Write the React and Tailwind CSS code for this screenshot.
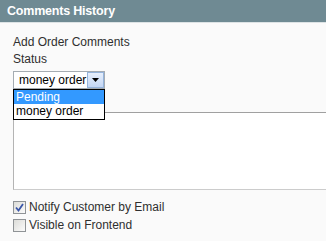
import React from 'react';

const font = { fontFamily: '"Liberation Sans", Arial, sans-serif' };

// --- 小元件: 勾選框 ---
const Checkbox = ({ checked, label }) => (
  <label className="flex items-center h-[18px] gap-[3px] text-[12px] text-[#2f2f2f]">
    <span className="w-[13px] h-[13px] border border-[#8f9396] bg-gradient-to-br from-[#dcdcd8] to-[#fbfbfb] flex items-center justify-center">
      {checked && (
        <svg width="9" height="9" viewBox="0 0 9 9">
          <path d="M1 4.5 L3.5 7.5 L8 1" fill="none" stroke="#3a56a8" strokeWidth="1.8" />
        </svg>
      )}
    </span>
    <span className="leading-[15px]">{label}</span>
  </label>
);

export default function App() {
  return (
    <div className="w-[326px] h-[241px] bg-[#fafafa] overflow-hidden" style={font}>
      <div className="h-[23px] bg-[#6f8a93] border-b border-[#dde3e5] flex items-center px-[7px]">
        <h2 className="text-[12.5px] font-bold text-white leading-none tracking-[-0.2px]">Comments History</h2>
      </div>

      <div className="pl-[13px] pt-[12px]">
        <div className="text-[12px] leading-[15px] text-[#2f2f2f]">Add Order Comments</div>
        <div className="text-[12px] leading-[15px] text-[#2f2f2f] mt-[2px]">Status</div>

        <div className="relative mt-[4px] w-[92px]">
          <div className="h-[18px] border border-[#a5acb2] bg-white flex items-center overflow-hidden">
            <span className="flex-1 pl-[5px] text-[12px] text-black whitespace-nowrap overflow-hidden">money order</span>
            <span className="w-[17px] h-[16px] border border-[#94b3dc] bg-gradient-to-b from-[#e6effc] to-[#c3d6f4] flex items-center justify-center shrink-0">
              <svg width="7" height="4" viewBox="0 0 7 4">
                <path d="M0 0 H7 L3.5 4 Z" fill="#000" />
              </svg>
            </span>
          </div>
          <ul className="absolute left-0 top-[18px] w-[92px] border border-black bg-white z-10 text-[12px] text-black">
            <li className="h-[14px] leading-[14px] pl-[2px] bg-[#3399ff] text-white">Pending</li>
            <li className="h-[15px] leading-[15px] pl-[2px]">money order</li>
          </ul>
        </div>

        <div className="mt-[23px] h-[78px] bg-white border-t border-l border-t-[#a0a0a0] border-l-[#b4b4b4] border-b border-b-[#cccccc]" />

        <div className="mt-[8px] flex flex-col">
          <Checkbox checked label="Notify Customer by Email" />
          <Checkbox label="Visible on Frontend" />
        </div>
      </div>
    </div>
  );
}
